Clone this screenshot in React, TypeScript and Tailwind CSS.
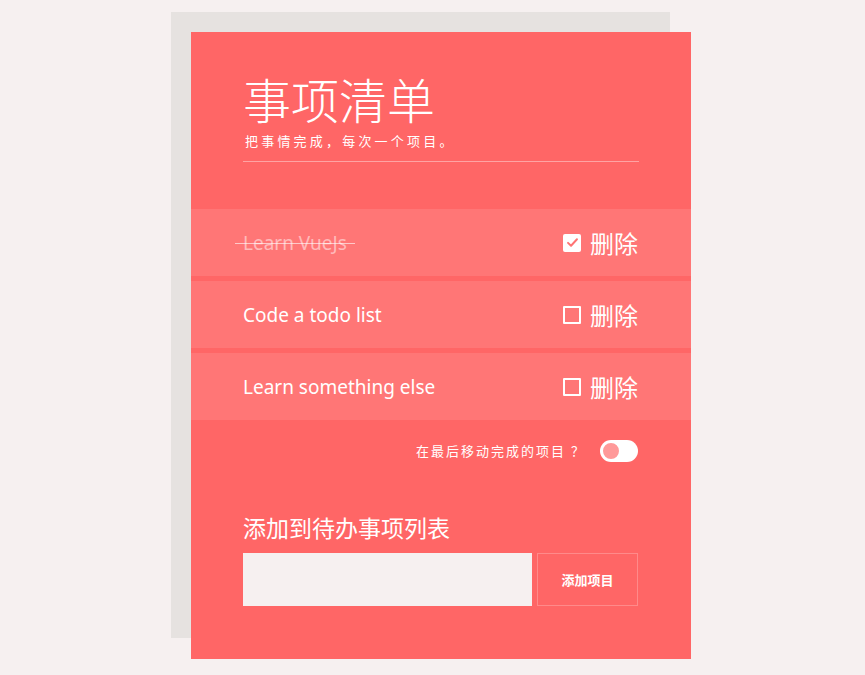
import React, { useState } from 'react';

interface Todo {
  id: number;
  text: string;
  done: boolean;
}

const FONT = { fontFamily: '"Noto Sans", "Noto Sans CJK SC", sans-serif' };
const CJK = { fontFamily: '"Noto Sans CJK SC", "Noto Sans", sans-serif' };

const Checkbox: React.FC<{ checked: boolean; onToggle: () => void }> = ({ checked, onToggle }) =>
  checked ? (
    <button onClick={onToggle} className="w-[18px] h-[18px] bg-white rounded-[2px] flex items-center justify-center">
      <svg viewBox="0 0 16 16" className="w-[13px] h-[13px]" fill="none" stroke="#ff7373" strokeWidth="2.4" strokeLinecap="round" strokeLinejoin="round">
        <path d="M2.5 8.5 L6.2 12 L13.5 4" />
      </svg>
    </button>
  ) : (
    <button onClick={onToggle} className="w-[18px] h-[18px] border-2 border-white rounded-[1px]" />
  );

const TodoRow: React.FC<{ todo: Todo; onToggle: () => void }> = ({ todo, onToggle }) => (
  <li className="h-[67px] bg-[#ff7676] flex items-center pl-[52px] pr-[53px]">
    <span className="flex-1 text-[19px] text-white pt-[2px]">
      {todo.done ? (
        <span className="relative text-white/50">
          {todo.text}
          <span className="absolute -left-2 -right-2 top-1/2 h-px bg-white/60" />
        </span>
      ) : (
        todo.text
      )}
    </span>
    <div className="flex items-center gap-[9px]">
      <Checkbox checked={todo.done} onToggle={onToggle} />
      <button className="text-[24px] leading-none text-white" style={CJK}>
        删除
      </button>
    </div>
  </li>
);

export default function App() {
  const [todos, setTodos] = useState<Todo[]>([
    { id: 1, text: 'Learn VueJs', done: true },
    { id: 2, text: 'Code a todo list', done: false },
    { id: 3, text: 'Learn something else', done: false },
  ]);
  const [moveDone, setMoveDone] = useState(false);

  const toggle = (id: number) =>
    setTodos((list) => list.map((t) => (t.id === id ? { ...t, done: !t.done } : t)));

  return (
    <div className="min-h-[675px] bg-[#f6f0f0] pt-3" style={FONT}>
      <div className="ml-[171px] w-[499px] h-[626px] bg-[#e6e2e0] pt-5 pl-5">
        <div className="w-[500px] h-[627px] bg-[#ff6666] text-white">
          {/* Header */}
          <div className="px-[52px] pt-[42px]">
            <div className="border-b border-white/40 pb-[13px]">
              <h1 className="text-[48px] leading-none font-light" style={CJK}>
                事项清单
              </h1>
              <p className="text-[13px] leading-[14px] tracking-[3.2px] mt-[12px] ml-[2px]" style={CJK}>
                把事情完成，每次一个项目。
              </p>
            </div>
          </div>

          {/* List */}
          <ul className="mt-[47px] flex flex-col gap-[5px]">
            {todos.map((t) => (
              <TodoRow key={t.id} todo={t} onToggle={() => toggle(t.id)} />
            ))}
          </ul>

          {/* Move done toggle */}
          <div className="flex items-center justify-end gap-[14px] px-[53px] mt-[20px]">
            <span className="text-[13px] tracking-[2px]" style={CJK}>
              在最后移动完成的项目 ？
            </span>
            <button
              onClick={() => setMoveDone((v) => !v)}
              className={`w-[38px] h-[22px] rounded-full bg-white flex items-center px-[1px] ${moveDone ? 'justify-end' : 'justify-start'}`}
            >
              <span className="w-[20px] h-[20px] rounded-full bg-[#ff9999] border-2 border-white" />
            </button>
          </div>

          {/* Add form */}
          <div className="px-[52px] mt-[54px]">
            <h2 className="text-[23px] leading-none" style={CJK}>
              添加到待办事项列表
            </h2>
            <div className="flex gap-[5px] mt-[14px]">
              <input className="w-[289px] h-[53px] bg-[#f6f0f0] outline-none px-3 text-gray-700" />
              <button className="w-[101px] h-[53px] border border-[#ff8a8a] text-[13px] font-bold" style={CJK}>
                添加项目
              </button>
            </div>
          </div>
        </div>
      </div>
    </div>
  );
}
